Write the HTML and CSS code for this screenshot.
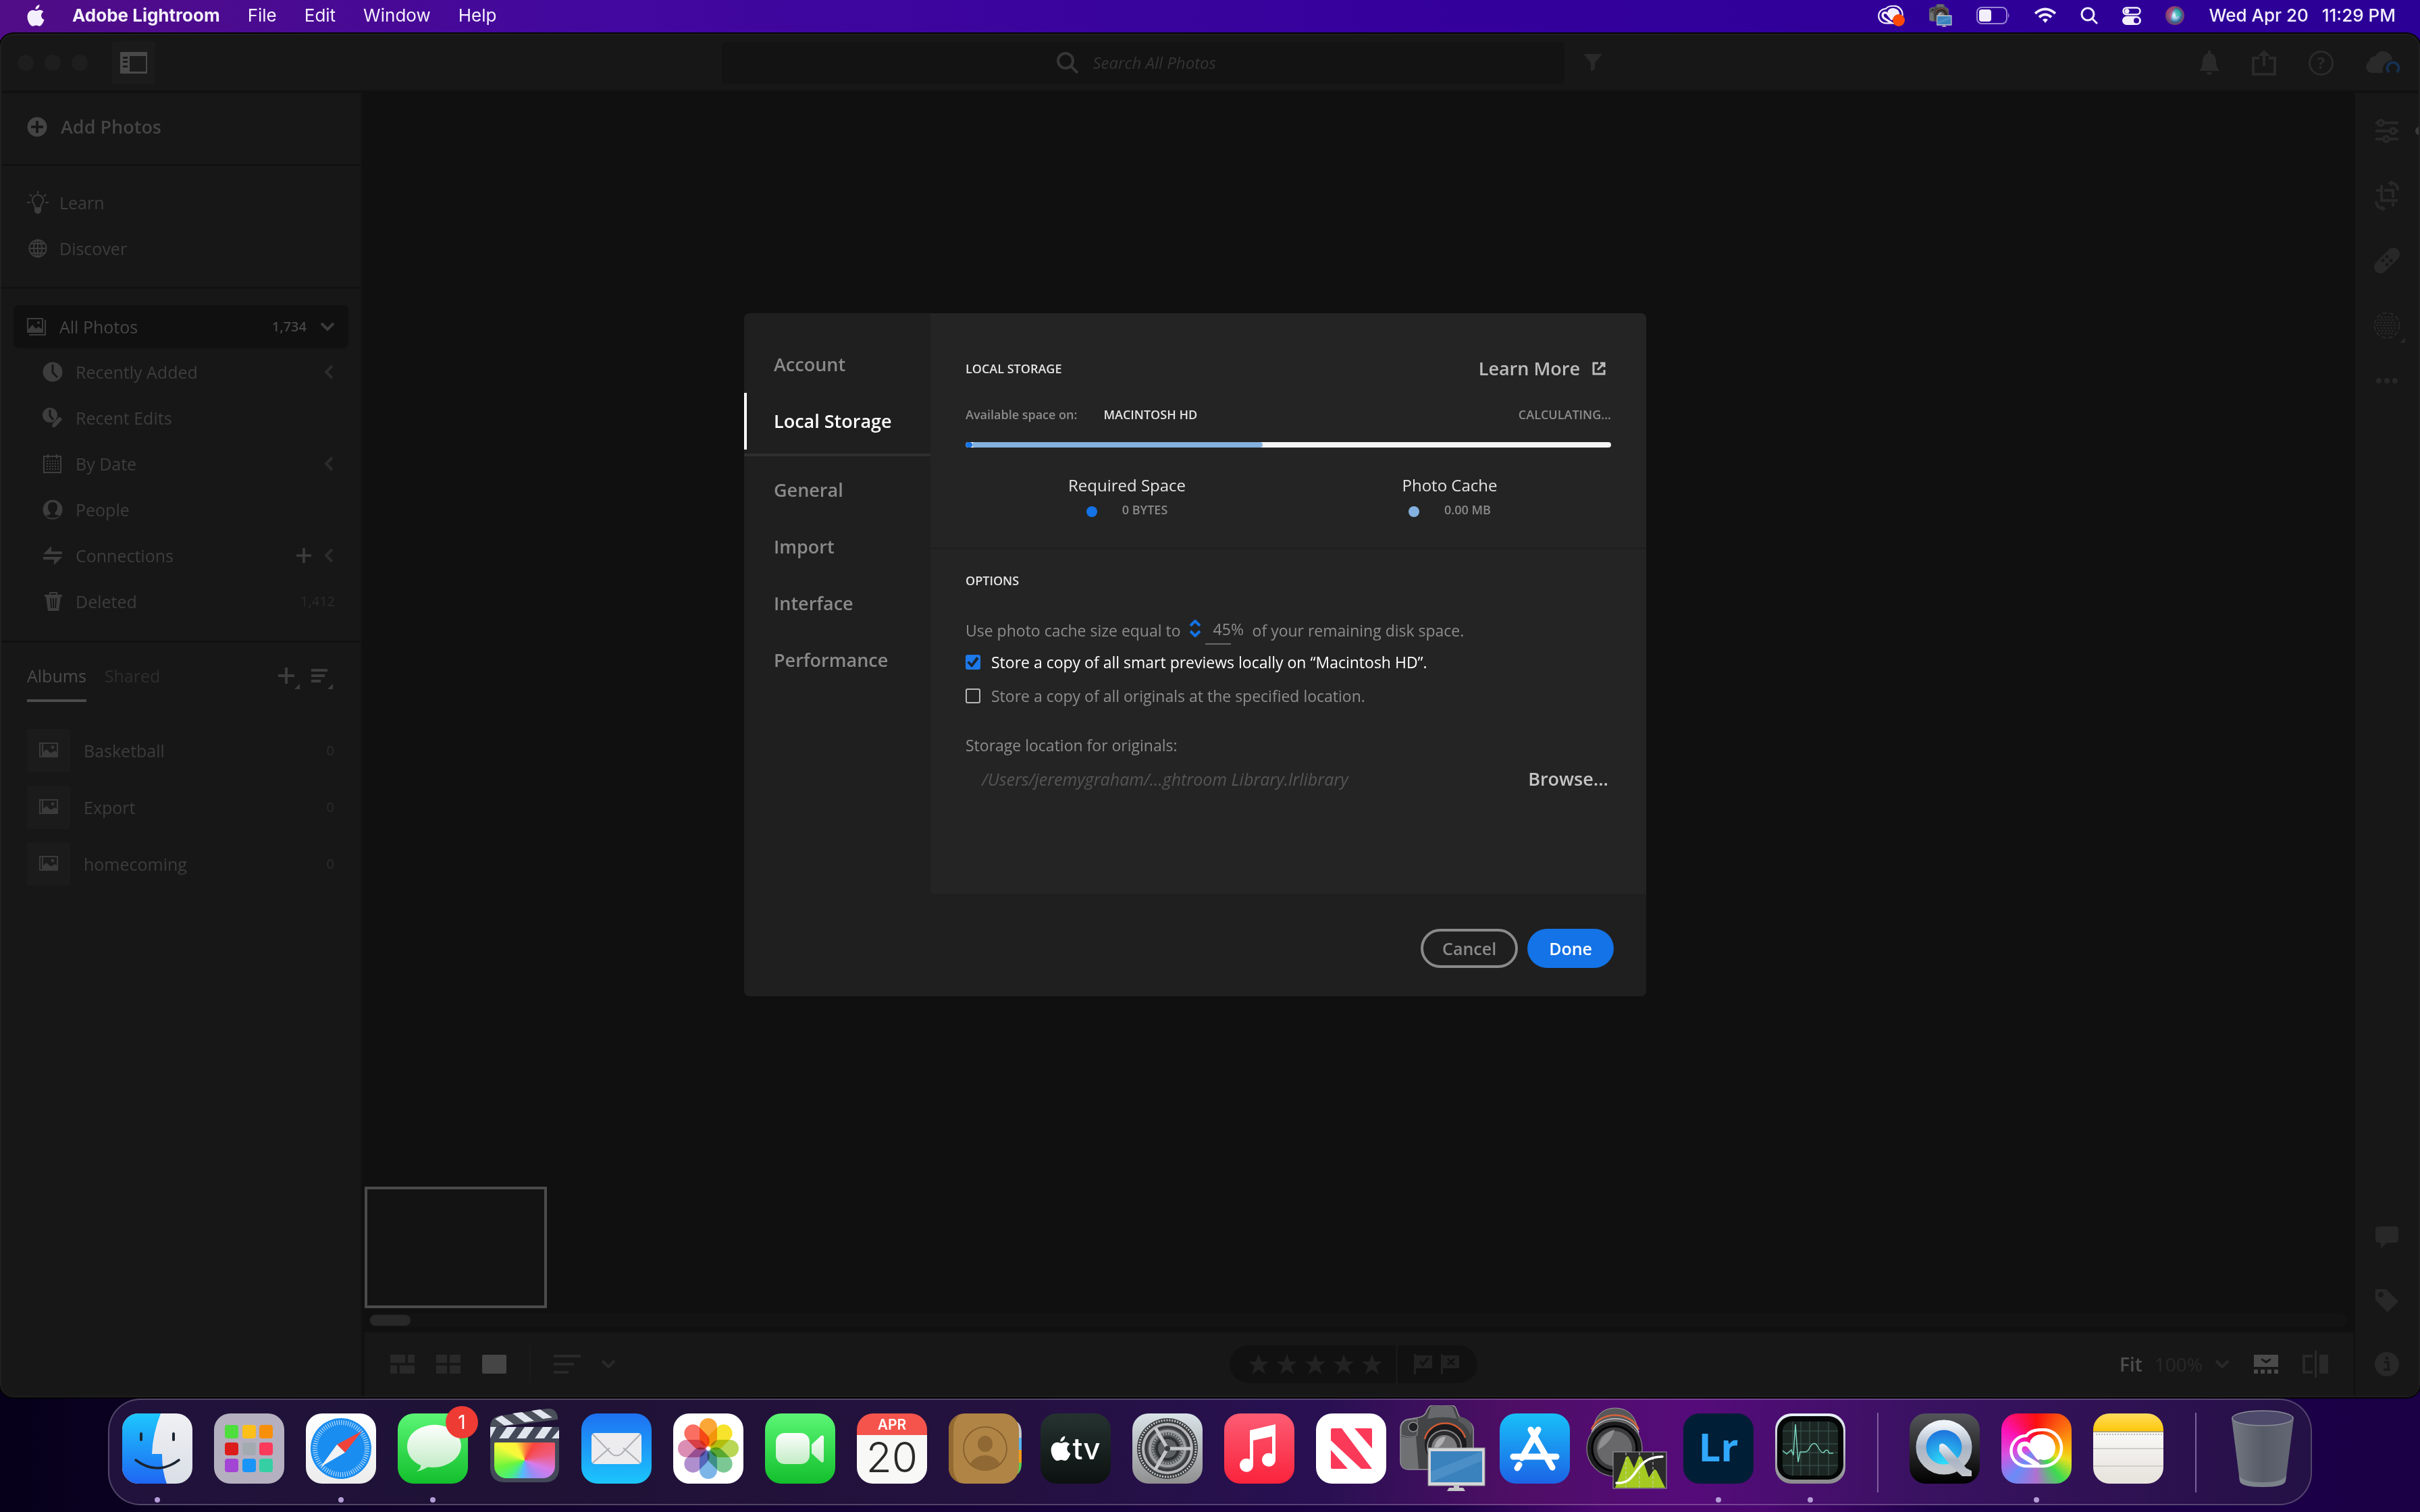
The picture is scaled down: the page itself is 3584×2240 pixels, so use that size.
FILE: index.html
```html
<!DOCTYPE html>
<html lang="en">
<head>
<meta charset="utf-8">
<title>Adobe Lightroom</title>
<link rel="stylesheet" href="styles.css">
</head>
<body>
<svg class="defs" width="0" height="0" aria-hidden="true">
  <defs>
    <symbol id="chev-left" viewBox="0 0 14 22"><path d="M12 2 3 11l9 9" fill="none" stroke="currentColor" stroke-width="4"/></symbol>
    <symbol id="chev-down" viewBox="0 0 22 14"><path d="M2 2l9 9 9-9" fill="none" stroke="currentColor" stroke-width="4"/></symbol>
    <symbol id="plus" viewBox="0 0 24 24"><path d="M12 0v24M0 12h24" stroke="currentColor" stroke-width="4"/></symbol>
    <symbol id="corner" viewBox="0 0 8 8"><path d="M8 0v8H0z" fill="currentColor"/></symbol>
    <symbol id="album" viewBox="0 0 28 22"><path d="M1 1h26v20H1zM5 1v20" fill="none" stroke="currentColor" stroke-width="2"/><path d="M6 14l5-4 5 5 3 0 4-3 4 3v6H6z" fill="currentColor"/><circle cx="20" cy="7" r="2.4" fill="currentColor"/></symbol>
    <symbol id="star" viewBox="0 0 30 30"><path d="M15 0l4 11h11l-9 7 4 12-10-7-10 7 4-12-9-7h11z" fill="currentColor"/></symbol>
    <symbol id="apple" viewBox="0 0 26 32"><path d="M18.500 0c.2 3.800-2.800 7.200-6 7C12.200 3.600 15.200.4 18.500 0zM13.500 9c1.300 0 3.200-1.500 5.700-1.300 2 .1 3.900 1 5.100 2.800-4.800 3-4 9.800 1.200 11.800C24.300 26 21.500 31.700 18.300 31.700c-1.700 0-2.500-1.100-4.700-1.100-2.300 0-3 1.100-4.800 1.200C4.800 32 .5 24.300.5 18c0-6.400 4-10 8-10.100C10.600 7.800 12.300 9 13.500 9z" fill="currentColor"/></symbol>
    <symbol id="camera" viewBox="0 0 128 128">
      <path d="M1 34q0-9 9-13l18-3q10-2 12-10l3-5q2-3 7-3h26q5 0 7 4l3 8q2 7 10 9 11 4 13 13v50q0 11-12 11H14Q2 95 1 84z" fill="#434446" stroke="#98989b" stroke-width="1.500"/>
      <path d="M46 2q18-3 32 0l7 18q-20-5-44 0z" fill="#67686b"/>
      <path d="M86 16q20 3 22 18l-3 12q-4-16-18-22z" fill="#58595c"/>
      <path d="M2 34q0-8 8-12l16-2v24q-8 6-24 0z" fill="#4e4f52" stroke="#8a8a8d"/>
      <path d="M2 46q14 4 22 0l4 48H14Q3 94 2 84z" fill="#707173"/>
      <circle cx="20" cy="32" r="7" fill="#202123" stroke="#8f8f92" stroke-width="1.500"/>
      <ellipse cx="68" cy="58" rx="31" ry="31" fill="#1b1b1d"/>
      <path d="M37 50a31 30 0 0 1 60-2" fill="none" stroke="#d35b35" stroke-width="2.500"/>
      <circle cx="66" cy="62" r="25" fill="#2a2a2c" stroke="#8a8a8c" stroke-width="2"/>
      <circle cx="66" cy="63" r="19" fill="#7c7c7e"/>
      <path d="M51 66q1-18 17-20-3 14-17 20z" fill="#b0b0b2"/>
      <rect x="42" y="63" width="84" height="56" fill="#d5d6d8" stroke="#8f9092"/>
      <rect x="46" y="68" width="76" height="46" fill="#3a82bd"/>
      <path d="M46 114V98l76-30v14z" fill="#5b9bd0" opacity=".5"/>
      <path d="M80 119h8v3h6l3 5H70l3-5h7z" fill="#c4c5c7"/>
    </symbol>
    <symbol id="ccloud" viewBox="0 0 80 60">
      <path d="M25 11C30 4 40 2 49 2a27 27 0 0 1 2 54H25A22 22 0 0 1 25 11z" fill="none" stroke="currentColor" stroke-width="4.500"/>
      <path d="M41 54L20 41q-6-5-5-11 1-7 8-7 5 0 9 6l11 14" fill="none" stroke="currentColor" stroke-width="7" stroke-linecap="round"/>
      <path d="M31 18Q37 8 50 9q17 3 18 20-1 16-16 18-7 0-11-6l-7-11q-5-6-3-12zM35 14l18 22q3 4-1 6" fill="currentColor"/>
    </symbol>
    <linearGradient id="g-finder" x1="0" y1="0" x2="0" y2="1"><stop offset="0" stop-color="#1dc7fd"/><stop offset="1" stop-color="#1f66f3"/></linearGradient>
    <linearGradient id="g-face" x1="0" y1="0" x2="0" y2="1"><stop offset="0" stop-color="#f0f0f4"/><stop offset="1" stop-color="#d9dfe6"/></linearGradient>
    <linearGradient id="g-bubble" x1="0" y1="0" x2="0" y2="1"><stop offset="0" stop-color="#fcfefc"/><stop offset="1" stop-color="#c3ecc6"/></linearGradient>
    <linearGradient id="g-steel" x1="0" y1="0" x2="0" y2="1"><stop offset="0" stop-color="#eef3fa"/><stop offset=".5" stop-color="#a9b4c4"/><stop offset="1" stop-color="#c3c6cb"/></linearGradient>
    <linearGradient id="g-can" x1="0" y1="0" x2="1" y2="0"><stop offset="0" stop-color="#7b8388"/><stop offset=".5" stop-color="#5c646b"/><stop offset="1" stop-color="#6a7179"/></linearGradient>
    <radialGradient id="g-qt" cx=".5" cy=".9" r=".9"><stop offset="0" stop-color="#2fe4fb"/><stop offset="1" stop-color="#1d63d8"/></radialGradient>
    <radialGradient id="g-siri"><stop offset="0" stop-color="#fff"/><stop offset=".35" stop-color="#8fc6e8"/><stop offset=".7" stop-color="#31688f"/><stop offset="1" stop-color="#8b3a66"/></radialGradient>
    <clipPath id="tile"><rect width="104" height="104" rx="24"/></clipPath>
  </defs>
</svg>

<header class="menubar">
  <nav class="menus" aria-label="Menu bar">
    <svg class="apple" width="26" height="32"><use href="#apple"/></svg>
    <a class="menu menu-app" href="#">Adobe Lightroom</a>
    <a class="menu" href="#">File</a>
    <a class="menu" href="#">Edit</a>
    <a class="menu" href="#">Window</a>
    <a class="menu" href="#">Help</a>
  </nav>
  <div class="status">
    <svg width="40" height="34" viewBox="0 0 40 34"><svg width="38" height="32" viewBox="0 0 80 60"><use href="#ccloud"/></svg><circle cx="31" cy="24" r="9" fill="#fa4a05"/></svg>
    <svg width="34" height="34"><use href="#camera"/></svg>
    <svg width="50" height="26" viewBox="0 0 50 26"><rect x="1" y="1" width="44" height="24" rx="7" fill="none" stroke="#9a84d6" stroke-width="2"/><rect x="4" y="4" width="18" height="18" rx="4" fill="#f2eefb"/><path d="M47 9q3 4 0 8z" fill="#9a84d6"/></svg>
    <svg width="32" height="24" viewBox="0 0 32 24" fill="none" stroke="#f2eefb" stroke-width="4"><path d="M1 9q15-13 30 0"/><path d="M7 14.500q9-8 18 0"/><path d="M12 18q4-3 8 0l-4 5z" fill="#f2eefb" stroke="none"/></svg>
    <svg width="26" height="26" viewBox="0 0 26 26" fill="none" stroke="#f2eefb" stroke-width="3"><circle cx="11" cy="11" r="9"/><path d="M17 17l8 8"/></svg>
    <svg width="28" height="28" viewBox="0 0 28 28"><rect x="1.500" y="2.500" width="25" height="10" rx="5" fill="none" stroke="#f2eefb" stroke-width="2.500"/><circle cx="7" cy="7.500" r="3.500" fill="#f2eefb"/><rect y="15" width="28" height="13" rx="6.500" fill="#f2eefb"/><circle cx="21" cy="21.500" r="4" fill="#300099"/></svg>
    <svg width="28" height="28" viewBox="0 0 28 28"><circle cx="14" cy="14" r="14" fill="url(#g-siri)"/><path d="M2 8q6-8 13-7-6 8-7 22-7-6-6-15z" fill="#d43b6a" opacity=".6"/><path d="M14 3q10 2 10 11l-9 2z" fill="#27b8a0" opacity=".6"/></svg>
    <time class="clock"><span>Wed Apr 20</span><span>11:29 PM</span></time>
  </div>
</header>

<main class="window">
  <div class="topbar">
    <div class="topbar-left">
      <div class="lights"><i></i><i></i><i></i></div>
      <button class="panel-toggle" aria-label="Toggle panel"><svg width="40" height="32" viewBox="0 0 40 32"><path d="M0 0h40v32H0zM14 6v23h24V6zM4 7v3h7V7zM4 13v3h7v-3zM4 20v3h7v-3z" fill="currentColor" fill-rule="evenodd"/></svg></button>
    </div>
    <div class="search-wrap">
      <label class="search">
        <svg width="34" height="34" viewBox="0 0 34 34" fill="none" stroke="currentColor" stroke-width="4"><circle cx="14" cy="14" r="11"/><path d="M22 22l10 10"/></svg>
        <input type="text" placeholder="Search All Photos" aria-label="Search All Photos">
      </label>
      <button class="plain" aria-label="Filter"><svg width="28" height="26" viewBox="0 0 28 26"><path d="M0 0h28L17 13v9l-6 4V13z" fill="currentColor"/></svg></button>
    </div>
    <div class="topbar-right">
      <button class="plain" aria-label="Notifications"><svg width="30" height="36" viewBox="0 0 30 36" fill="currentColor"><path d="M13 0h4v4q8 2 8 12 0 9 5 14H0q5-5 5-14Q5 6 13 4zM11 32h8q-1 4-4 4t-4-4z"/></svg></button>
      <button class="plain" aria-label="Share"><svg width="36" height="38" viewBox="0 0 36 38" fill="none" stroke="currentColor" stroke-width="4"><path d="M11 12H2v24h32V12h-9M18 24V6"/><path d="M9 9l9-9 9 9z" fill="currentColor" stroke="none"/></svg></button>
      <button class="plain help" aria-label="Help">?</button>
      <button class="plain" aria-label="Cloud sync"><svg width="52" height="36" viewBox="0 0 52 36"><path d="M9 33a9 9 0 0 1-4-17Q5 9 14 8 20-3 31 2q8 4 8 12-16 3-14 19z" fill="currentColor"/><path d="M34 32a8.500 8.500 0 1 1 12 0" fill="none" stroke="#16304f" stroke-width="4"/></svg></button>
    </div>
  </div>

  <div class="workspace">
    <aside class="sidebar">
      <div class="group group-add">
        <button class="row add"><svg width="30" height="30" viewBox="0 0 30 30"><circle cx="15" cy="15" r="14.500" fill="currentColor"/><path d="M15 6v18M6 15h18" stroke="#171717" stroke-width="4"/></svg>Add Photos</button>
      </div>
      <div class="group group-learn">
        <a class="row" href="#"><svg width="32" height="34" viewBox="0 0 32 34" fill="none" stroke="currentColor" stroke-width="2"><path d="M12 25q0-4-2-6a8 8 0 1 1 12 0q-2 2-2 6z"/><path d="M16 0v4M4 5l3 3M28 5l-3 3M0 17h5M27 17h5"/><path d="M12 25h8v5q-4 6-8 0z" fill="currentColor"/></svg>Learn</a>
        <a class="row" href="#"><svg width="32" height="28" viewBox="0 0 32 28" fill="none" stroke="currentColor" stroke-width="2"><circle cx="16" cy="14" r="12.500"/><ellipse cx="16" cy="14" rx="6" ry="12.500"/><path d="M16 1v26M3.500 14h25M6 7h20M6 21h20"/></svg>Discover</a>
      </div>
      <div class="group group-photos">
        <a class="row all" href="#"><svg width="28" height="26" viewBox="0 0 28 26"><path d="M1 1h22v20H1zM3 25h24V3" fill="none" stroke="currentColor" stroke-width="2"/><path d="M2 17l6-7 5 6 4-3 6 4v4H2z" fill="currentColor"/><circle cx="17" cy="7" r="2" fill="currentColor"/></svg><span class="grow">All Photos</span><span class="count">1,734</span><svg width="22" height="14"><use href="#chev-down"/></svg></a>
        <a class="row sub" href="#"><svg width="30" height="30" viewBox="0 0 30 30"><circle cx="15" cy="15" r="14.500" fill="currentColor"/><path d="M15 4v12l7 7" fill="none" stroke="#171717" stroke-width="3"/></svg><span class="grow">Recently Added</span><svg class="dim" width="14" height="22"><use href="#chev-left"/></svg></a>
        <a class="row sub" href="#"><svg width="30" height="30" viewBox="0 0 30 30"><circle cx="11" cy="11" r="11" fill="currentColor"/><path d="M11 3v9l5 6" fill="none" stroke="#171717" stroke-width="3"/><path d="M25 13l5 4-11 12-5 1v-6z" fill="currentColor" stroke="#171717"/></svg><span class="grow">Recent Edits</span></a>
        <a class="row sub" href="#"><svg width="30" height="28" viewBox="0 0 30 28"><path d="M2 3h25v24H2zM8 0v6M21 0v6" fill="none" stroke="currentColor" stroke-width="2"/><path d="M6 10h18M6 14h18M6 18h18M6 22h18" stroke="currentColor" stroke-width="2" stroke-dasharray="2 2"/></svg><span class="grow">By Date</span><svg class="dim" width="14" height="22"><use href="#chev-left"/></svg></a>
        <a class="row sub" href="#"><svg width="30" height="30" viewBox="0 0 30 30"><circle cx="15" cy="15" r="14.500" fill="currentColor"/><path d="M15 4q7 0 7 7 0 6-4 9 0 3 8 4-11 7-22 0 8-1 8-4-4-3-4-9 0-7 7-7z" fill="#171717"/></svg><span class="grow">People</span></a>
        <a class="row sub" href="#"><svg width="30" height="28" viewBox="0 0 30 28" fill="currentColor"><path d="M1 12L13 0v8h16v4zM29 16L17 28v-8H1v-4z"/></svg><span class="grow">Connections</span><svg width="22" height="22"><use href="#plus"/></svg><svg class="dim" width="14" height="22"><use href="#chev-left"/></svg></a>
        <a class="row sub" href="#"><svg width="30" height="28" viewBox="0 0 30 28"><path d="M3 4h26v3h-2l-3 21H8L5 7H3zM11 9l1 15M16 9v15M21 9l-1 15" fill="currentColor"/><path d="M11 4V1h10v3" fill="none" stroke="currentColor" stroke-width="2"/><path d="M12 9l1 15M16 9v15M20 9l-1 15" stroke="#171717" stroke-width="2"/></svg><span class="grow">Deleted</span><span class="count faint">1,412</span></a>
      </div>
      <div class="group group-albums">
        <div class="tabs">
          <a class="tab tab-on" href="#">Albums</a>
          <a class="tab" href="#">Shared</a>
          <span class="grow"></span>
          <button class="plain mini" aria-label="Add album"><svg width="24" height="24"><use href="#plus"/></svg><svg class="tri" width="8" height="8"><use href="#corner"/></svg></button>
          <button class="plain mini" aria-label="Sort albums"><svg width="24" height="20" viewBox="0 0 24 20"><path d="M0 2h24M0 10h20M0 18h14" stroke="currentColor" stroke-width="4"/></svg><svg class="tri" width="8" height="8"><use href="#corner"/></svg></button>
        </div>
        <a class="album" href="#"><span class="thumb"><svg width="28" height="22"><use href="#album"/></svg></span><span class="grow">Basketball</span><span class="count faint">0</span></a>
        <a class="album" href="#"><span class="thumb"><svg width="28" height="22"><use href="#album"/></svg></span><span class="grow">Export</span><span class="count faint">0</span></a>
        <a class="album" href="#"><span class="thumb"><svg width="28" height="22"><use href="#album"/></svg></span><span class="grow">homecoming</span><span class="count faint">0</span></a>
      </div>
    </aside>

    <section class="stage">
      <div class="canvas"></div>
      <div class="frame"></div>
      <div class="scroll"><i></i></div>
      <div class="toolbar">
        <div class="tools">
          <button class="plain" aria-label="Photo grid"><svg width="36" height="28" viewBox="0 0 36 28" fill="currentColor"><path d="M0 0h22v12H0zM26 0h10v12H26zM0 16h10v12H0zM14 16h22v12H14z"/></svg></button>
          <button class="plain" aria-label="Square grid"><svg width="36" height="28" viewBox="0 0 36 28" fill="currentColor"><path d="M0 0h16v12H0zM20 0h16v12H20zM0 16h16v12H0zM20 16h16v12H20z"/></svg></button>
          <button class="plain on" aria-label="Detail"><svg width="36" height="28" viewBox="0 0 36 28"><rect width="36" height="28" rx="2" fill="currentColor"/></svg></button>
          <i class="rule"></i>
          <button class="plain sort" aria-label="Sort"><svg width="40" height="28" viewBox="0 0 40 28"><path d="M0 2h40M0 14h30M0 26h22" stroke="currentColor" stroke-width="4"/></svg><svg width="22" height="14"><use href="#chev-down"/></svg></button>
        </div>
        <div class="rating">
          <div class="stars"><svg width="30" height="30"><use href="#star"/></svg><svg width="30" height="30"><use href="#star"/></svg><svg width="30" height="30"><use href="#star"/></svg><svg width="30" height="30"><use href="#star"/></svg><svg width="30" height="30"><use href="#star"/></svg></div>
          <div class="flags">
            <svg width="28" height="30" viewBox="0 0 28 30"><path d="M0 0h3v30H0zM3 2h24v19H3z" fill="currentColor"/><path d="M9 11l4 5 8-10" fill="none" stroke="#111" stroke-width="3"/></svg>
            <svg width="28" height="30" viewBox="0 0 28 30"><path d="M0 0h3v30H0zM3 2h24v19H3z" fill="currentColor"/><path d="M10 7l10 9M20 7l-10 9" fill="none" stroke="#111" stroke-width="3"/></svg>
          </div>
        </div>
        <div class="zoom">
          <span class="fit">Fit</span><span class="pct">100%</span><svg width="22" height="14"><use href="#chev-down"/></svg>
          <svg class="strip" width="36" height="28" viewBox="0 0 36 28"><path d="M0 0h36v18H0zM0 22h6v6H0zM10 22h6v6h-6zM20 22h6v6h-6zM30 22h6v6h-6z" fill="currentColor"/><path d="M11 5l7 4 7-4v3l-7 5-7-5z" fill="#171717"/></svg>
          <svg class="split" width="38" height="40" viewBox="0 0 38 40"><path d="M15 8H2v24h13" fill="none" stroke="currentColor" stroke-width="4"/><path d="M18 0h3v40h-3zM25 6h13v28H25z" fill="currentColor"/></svg>
        </div>
      </div>
    </section>

    <aside class="rail">
      <button class="plain slot edge" aria-label="Edit"><svg width="34" height="36" viewBox="0 0 34 36" fill="none" stroke="currentColor" stroke-width="4"><path d="M0 6h4M13 6h21M0 18h22M31 18h3M0 30h11M20 30h14"/><circle cx="8" cy="6" r="4"/><circle cx="26" cy="18" r="4"/><circle cx="16" cy="30" r="4"/></svg></button>
      <button class="plain slot" aria-label="Crop"><svg width="36" height="46" viewBox="0 0 36 46" fill="none" stroke="currentColor" stroke-width="4"><path d="M10 7v23h24M2 15h6M14 15h13v11M27 33v6"/><path d="M25 4q9 1 9 11M11 42Q2 40 2 31"/><path d="M26 0v9l-7-5zM10 37v9l7-4z" fill="currentColor" stroke="none"/></svg></button>
      <button class="plain slot" aria-label="Healing"><svg width="38" height="38" viewBox="0 0 38 38"><rect x="-4" y="9.500" width="46" height="19" rx="9.500" fill="currentColor" transform="rotate(-45 19 19)"/><g fill="#171717"><circle cx="19" cy="13" r="2.500"/><circle cx="25" cy="19" r="2.500"/><circle cx="19" cy="25" r="2.500"/><circle cx="13" cy="19" r="2.500"/></g></svg></button>
      <button class="plain slot" aria-label="Masking"><svg width="40" height="40" viewBox="0 0 40 40" fill="none" stroke="currentColor"><circle cx="20" cy="20" r="18.500" stroke-width="2" stroke-dasharray="7 3"/><path d="M11 8h18M7 12h26M5 16h30M4 20h32M5 24h30M7 28h26M11 32h18" stroke-width="2" stroke-dasharray="3 2"/></svg><svg class="tri" width="8" height="8"><use href="#corner"/></svg></button>
      <button class="plain slot more" aria-label="More"><svg width="34" height="8" viewBox="0 0 34 8" fill="currentColor"><circle cx="5" cy="4" r="4"/><circle cx="17" cy="4" r="4"/><circle cx="29" cy="4" r="4"/></svg></button>
      <span class="grow"></span>
      <button class="plain slot low" aria-label="Comments"><svg width="34" height="32" viewBox="0 0 34 32"><path d="M5 0h24q5 0 5 5v14q0 5-5 5H17l-9 8v-8H5q-5 0-5-5V5q0-5 5-5z" fill="currentColor"/></svg></button>
      <button class="plain slot low" aria-label="Keywords"><svg width="34" height="34" viewBox="0 0 34 34"><path d="M0 0h16l18 18-16 16L0 16zM8 4a4 4 0 1 0 .1 0z" fill="currentColor" fill-rule="evenodd"/></svg></button>
      <button class="plain slot low" aria-label="Info"><svg width="36" height="36" viewBox="0 0 36 36"><circle cx="18" cy="18" r="18" fill="currentColor"/><path d="M14 15h6v11h3M13 26h10" fill="none" stroke="#171717" stroke-width="3"/><circle cx="18" cy="9" r="2.500" fill="#171717"/></svg></button>
    </aside>
  </div>

  <div class="overlay">
    <div class="dialog" role="dialog" aria-label="Preferences">
      <nav class="prefs">
        <a class="pref" href="#">Account</a>
        <a class="pref pref-on" href="#">Local Storage</a>
        <hr>
        <a class="pref" href="#">General</a>
        <a class="pref" href="#">Import</a>
        <a class="pref" href="#">Interface</a>
        <a class="pref" href="#">Performance</a>
      </nav>
      <div class="pane">
        <section class="storage">
          <div class="line">
            <h2>LOCAL STORAGE</h2>
            <a class="learn" href="#">Learn More <svg width="20" height="20" viewBox="0 0 20 20" fill="none" stroke="currentColor" stroke-width="3"><path d="M9 2H2v16h16v-6"/><path d="M8 12l9-9M12 2h6v6"/></svg></a>
          </div>
          <div class="line space">
            <span class="avail">Available space on:</span><strong>MACINTOSH HD</strong><span class="grow"></span><span>CALCULATING...</span>
          </div>
          <div class="meter"><i class="m-req" style="width:1%"></i><i class="m-cache" style="width:45%"></i></div>
          <div class="legend">
            <div><p>Required Space</p><p class="amount"><i class="dot req"></i>0 BYTES</p></div>
            <div><p>Photo Cache</p><p class="amount"><i class="dot cache"></i>0.00 MB</p></div>
          </div>
        </section>
        <section class="options">
          <h2>OPTIONS</h2>
          <div class="cache-row">
            <label for="cache">Use photo cache size equal to</label>
            <svg width="18" height="26" viewBox="0 0 18 26" fill="none" stroke="#1473e6" stroke-width="4"><path d="M2 9l7-7 7 7M2 17l7 7 7-7"/></svg>
            <input id="cache" type="text" value="45%">
            <span>of your remaining disk space.</span>
          </div>
          <label class="check check-on"><input type="checkbox" checked>Store a copy of all smart previews locally on “Macintosh HD”.</label>
          <label class="check"><input type="checkbox">Store a copy of all originals at the specified location.</label>
          <p class="where">Storage location for originals:</p>
          <div class="line path-row"><em>/Users/jeremygraham/...ghtroom Library.lrlibrary</em><button class="plain browse">Browse...</button></div>
        </section>
      </div>
      <footer class="actions">
        <button class="pill cancel">Cancel</button>
        <button class="pill done">Done</button>
      </footer>
    </div>
  </div>
</main>

<footer class="dock-area">
  <div class="dock">
    <div class="app running"><svg viewBox="0 0 104 104"><g clip-path="url(#tile)"><rect width="104" height="104" fill="url(#g-face)"/><path d="M0 0h57q-12 30-13 60h15q0 26 7 44H0z" fill="url(#g-finder)"/></g><path d="M28 30v9M76 30v9" stroke="#1b2430" stroke-width="4" stroke-linecap="round"/><path d="M20 69q32 24 64 0" fill="none" stroke="#1b2430" stroke-width="3.500" stroke-linecap="round"/></svg></div>
    <div class="app"><svg class="t-launch" viewBox="0 0 104 104"><g><rect x="16" y="17" width="20" height="20" rx="4" fill="#4ede3e"/><rect x="42" y="17" width="20" height="20" rx="4" fill="#fdbf1a"/><rect x="67" y="17" width="20" height="20" rx="4" fill="#f78f0b"/><rect x="16" y="43" width="20" height="19" rx="4" fill="#dc1c1a"/><rect x="42" y="43" width="20" height="19" rx="4" fill="#a3abb0"/><rect x="67" y="43" width="20" height="19" rx="4" fill="#fb3b5b"/><rect x="16" y="67" width="20" height="20" rx="4" fill="#a345d4"/><rect x="42" y="67" width="20" height="20" rx="4" fill="#1995f7"/><rect x="67" y="67" width="20" height="20" rx="4" fill="#35cfa3"/></g></svg></div>
    <div class="app running"><svg class="t-white" viewBox="0 0 104 104"><circle cx="52" cy="52" r="45" fill="#1a8df0"/><circle cx="52" cy="52" r="38.500" fill="none" stroke="#cfe8fb" stroke-width="7" stroke-dasharray="1 2.360"/><path d="M83 26L46 46l12 12z" fill="#f0433a"/><path d="M22 79l24-33 12 12z" fill="#f1f2f4"/></svg></div>
    <div class="app running"><svg class="t-green" viewBox="0 0 104 104"><path d="M28 86q8-5 6-12a39 31 0 1 1 12 4q-8 6-18 8z" fill="url(#g-bubble)"/><path d="M52 18c22 0 38 13 38 31S74 80 52 80 14 67 14 49s16-31 38-31z" fill="url(#g-bubble)"/></svg><span class="badge">1</span></div>
    <div class="app"><svg class="t-fcp" viewBox="0 0 104 104"><path d="M1 20Q1 8 12 4L84-7q14-2 17 12v4L4 21z" fill="#4a4f5a"/><path d="M8 8l10-5 18 13-14 2zM34 0l14-2 18 13-14 2zM62-4l13-2 18 12-14 2z" fill="#e1e5ee"/><path d="M1 20h102v60q0 22-22 22H23Q1 102 1 80z" fill="#434958"/><path d="M1 37V20h9zM26 20h14L28 37H14zM52 20h14L54 37H40zM79 20h14L81 37H67zM103 24v13H92z" fill="#e1e5ee"/></svg><i class="spectrum"></i></div>
    <div class="app"><svg class="t-mail" viewBox="0 0 104 104"><rect x="15" y="29" width="74" height="46" rx="5" fill="#ececee"/><path d="M17 73l25-22M87 73L62 51M17 31l28 29q7 5 14 0l28-29" fill="none" stroke="#aeb0b4" stroke-width="2"/></svg></div>
    <div class="app"><svg class="t-white photos" viewBox="0 0 104 104"><g><rect x="39" y="7" width="26" height="42" rx="13" fill="#fb9d22"/><rect x="39" y="7" width="26" height="42" rx="13" fill="#f7e014" transform="rotate(45 52 52)"/><rect x="39" y="7" width="26" height="42" rx="13" fill="#b2d342" transform="rotate(90 52 52)"/><rect x="39" y="7" width="26" height="42" rx="13" fill="#6ec28a" transform="rotate(135 52 52)"/><rect x="39" y="7" width="26" height="42" rx="13" fill="#6eaee6" transform="rotate(180 52 52)"/><rect x="39" y="7" width="26" height="42" rx="13" fill="#a783c9" transform="rotate(225 52 52)"/><rect x="39" y="7" width="26" height="42" rx="13" fill="#d881ac" transform="rotate(270 52 52)"/><rect x="39" y="7" width="26" height="42" rx="13" fill="#fa5f50" transform="rotate(315 52 52)"/></g></svg></div>
    <div class="app"><svg class="t-green" viewBox="0 0 104 104"><rect x="16" y="29" width="50" height="46" rx="13" fill="url(#g-bubble)"/><path d="M69 46l14-13q4-2 4 3v33q0 5-4 3L69 59z" fill="url(#g-bubble)"/></svg></div>
    <div class="app cal"><span class="month">APR</span><span class="day">20</span></div>
    <div class="app"><svg viewBox="0 0 104 104"><path d="M92 10q16 0 16 20v10H92z" fill="#c4c7c9"/><path d="M92 36h16v20H92z" fill="#56b4f2"/><path d="M92 54h16v20H92z" fill="#fb9c15"/><path d="M92 73h16q0 20-16 20z" fill="#53cf59"/><rect width="104" height="104" rx="24" fill="#b08445"/><path d="M16 2Q0 8 0 24v56q0 16 16 22-9-8-9-22V24Q7 10 16 2z" fill="#936a31"/><g fill="none" stroke="#80592a" stroke-width="1.500"><circle cx="54" cy="52" r="32"/></g><ellipse cx="54" cy="45" rx="11" ry="12" fill="#8f6833"/><path d="M32 74q8-12 22-12t22 12q-9 11-22 11T32 74z" fill="#8f6833"/></svg></div>
    <div class="app tv"><svg width="30" height="38" viewBox="0 0 26 32"><use href="#apple"/></svg><span>tv</span></div>
    <div class="app"><svg class="t-gear" viewBox="0 0 104 104"><circle cx="52" cy="52" r="45" fill="#3a3d3f"/><circle cx="52" cy="52" r="42" fill="none" stroke="#c8cacb" stroke-width="3" stroke-dasharray="2 2"/><circle cx="52" cy="52" r="36" fill="none" stroke="#b4b6b7" stroke-width="4"/><circle cx="52" cy="52" r="30" fill="#55585a"/><circle cx="52" cy="52" r="26" fill="none" stroke="#9da0a1" stroke-width="4"/><circle cx="52" cy="52" r="22" fill="none" stroke="#9da0a1" stroke-width="3" stroke-dasharray="2 2"/><circle cx="52" cy="52" r="16" fill="#5d6062" stroke="#2e3133" stroke-width="4"/><path d="M52 52h36M52 52L34 21M52 52L34 83" stroke="#c4c6c7" stroke-width="5"/><circle cx="52" cy="52" r="4" fill="#3a3d3f"/></svg></div>
    <div class="app"><svg class="t-music" viewBox="0 0 104 104"><path d="M38 25l38-9v52a10 10 0 1 1-5-8V34l-28 6v36a10 10 0 1 1-5-8z" fill="#fff"/></svg></div>
    <div class="app"><svg class="t-flat" viewBox="0 0 104 104"><path d="M22 24q0-2 2-2h14l45 60H67L22 40zM57 22h24q2 0 2 2v28zM22 54l25 28H24q-2 0-2-2z" fill="#fb3a59"/></svg></div>
    <div class="app"><svg class="cam" viewBox="0 0 128 128"><use href="#camera" width="128" height="128"/></svg></div>
    <div class="app"><svg class="t-store" viewBox="0 0 104 104" stroke="#fff" stroke-width="9" stroke-linecap="round"><path d="M46 24l32 56M57 24L33 66M29 76l-3 5M20 64h64"/></svg></div>
    <div class="app"><svg class="lens" viewBox="0 0 120 120"><path d="M10 34Q14 0 43 0t34 34l6 28H3z" fill="#58585a" stroke="#9a9a9c"/><path d="M8 36a37 30 0 0 1 70 0" fill="none" stroke="#c9c9cb" stroke-width="1.500"/><path d="M8 32a37 32 0 0 1 70 0" fill="none" stroke="#d9623b" stroke-width="2.500"/><circle cx="42" cy="60" r="41" fill="#1d1d1f" stroke="#77777a" stroke-width="1.500"/><circle cx="42" cy="60" r="33" fill="#3b3b3d" stroke="#000" stroke-width="3"/><circle cx="42" cy="60" r="26" fill="#68686a"/><path d="M18 62q2-24 24-30-3 16-24 30z" fill="#8e8e90"/><rect x="40" y="65" width="79" height="54" fill="#2b2b2c" stroke="#a2a2a4"/><path d="M43 118l16-45q3-4 5 1l7 15 7-17q3-3 6 5l9 26 7-11q3-3 6 4l11 22z" fill="#a5cb22"/><path d="M59 66v52M79 66v52M99 66v52" stroke="#d0d0d0" stroke-dasharray="4 3"/><path d="M45 111c34 2 24-39 68-39" fill="none" stroke="#fff" stroke-width="3.500" stroke-linecap="round"/></svg></div>
    <div class="app running lr">Lr</div>
    <div class="app running"><svg class="t-act" viewBox="0 0 104 104"><rect x="3" y="4" width="98" height="94" rx="22" fill="#060808"/><rect x="11" y="12" width="82" height="80" rx="14" fill="#1c2724"/><path d="M11 26h82M11 45h82M11 58h82M11 77h82M26 12v80M38 12v80M51 12v80M64 12v80M79 12v80" stroke="#3e5a52"/><path d="M11 55l6 5 7-6 3 8 3-46 4 56 3-15h8q4-1 7-8 6-9 11 0 5 10 9 9 5-8 8 1h6" fill="none" stroke="#79d3bd" stroke-width="1.500"/></svg></div>
    <i class="sep"></i>
    <div class="app"><svg class="t-qt" viewBox="0 0 104 104"><ellipse cx="51" cy="50" rx="34" ry="33" fill="url(#g-qt)" stroke="url(#g-steel)" stroke-width="15"/><path d="M44 47q4-6 12 2l28 32q8 4 8 4v8H78Q58 76 44 56z" fill="url(#g-steel)"/></svg></div>
    <div class="app running cc"><svg width="80" height="60" viewBox="0 0 80 60"><use href="#ccloud"/></svg></div>
    <div class="app"><svg class="t-notes" viewBox="0 0 104 104"><path d="M0 26h104v2H0z" fill="#b6a56d"/><path d="M4 31h98" stroke="#b9b9b6" stroke-width="2" stroke-dasharray="2 2"/><path d="M0 52h104M0 78h104" stroke="#cfcecb" stroke-width="2"/></svg></div>
    <i class="sep"></i>
    <div class="app"><svg class="bin" viewBox="0 0 104 120"><path d="M6 13l12 93q2 9 34 9t34-9l12-93z" fill="url(#g-can)" opacity=".9"/><ellipse cx="52" cy="13" rx="45" ry="11" fill="#4d4a6b" stroke="#8b8d99" stroke-width="1.500"/><path d="M17 98q6 10 35 10t35-10l-1 8q-2 9-34 9t-34-9z" fill="#8f979d" opacity=".6"/></svg></div>
  </div>
</footer>
</body>
</html>
```
FILE: styles.css
```css
:root {
  --ui: "Open Sans", "Noto Sans", sans-serif;
  --mac: Inter, "Liberation Sans", sans-serif;
  --chrome: #171717;
  --canvas: #101010;
  --line: #111;
}

* { box-sizing: border-box; }

body {
  margin: 0;
  min-height: 100vh;
  display: grid;
  grid-template-rows: 50px 1fr 170px;
  overflow: hidden;
  font: 24px/36px var(--ui);
  color: #3c3c3c;
  background:
    linear-gradient(90deg, #510d86, #42089f 25%, #34009c 60%, #2b0096) top / 100% 72px no-repeat,
    linear-gradient(90deg, #06001a, #0d0224 8%, #150333 30%, #1c0245 60%, #4b0670 66%, #4b0670 73%, #1c0048 80%, #1b0046);
}

a { color: inherit; text-decoration: none; }
button, input { font: inherit; color: inherit; border: 0; background: none; padding: 0; margin: 0; }
h2, p, hr { margin: 0; }
svg { display: block; flex: none; }
.defs { position: absolute; }
.grow { flex: 1; }

/* Menu bar */
.menubar { display: flex; justify-content: space-between; padding: 0 36px 4px 40px; font: 400 26px/46px var(--mac); color: #f4effc; }
.menus, .status { display: flex; align-items: center; }
.menus { gap: 41px; }
.menu-app { font-weight: 700; }
.status { gap: 36px; }
.clock { display: flex; gap: 20px; font-weight: 500; }

/* App window */
.window { position: relative; display: flex; flex-direction: column; background: var(--chrome); border: 2px solid #202020; border-bottom-color: #1d1d1d; border-radius: 20px; box-shadow: 0 0 0 2px #050505; overflow: hidden; min-height: 0; }
.topbar { height: 82px; display: grid; grid-template-columns: 15fr 1304px 17fr; align-items: center; padding: 0 26px 0 24px; }
.topbar-left { display: flex; align-items: center; }
.lights { display: flex; gap: 16px; margin-right: 36px; }
.lights i { width: 24px; height: 24px; border-radius: 50%; background: #1e1e1e; }
.panel-toggle { width: 64px; height: 64px; display: grid; place-items: center; border-radius: 4px; background: #1b1b1b; color: #494949; }
.search-wrap { display: flex; align-items: center; gap: 28px; color: #292929; }
.search { width: 1248px; height: 62px; display: flex; align-items: center; justify-content: center; gap: 20px; background: #131313; border-radius: 6px; color: #363636; }
.search input { width: 204px; font-style: italic; outline: 0; appearance: none; }
.search input::placeholder { color: #343434; opacity: 1; }
.topbar-right { display: flex; justify-content: flex-end; align-items: center; gap: 48px; color: #2a2a2a; }
.plain { display: flex; align-items: center; justify-content: center; }
.help { width: 37px; height: 37px; border: 3px solid; border-radius: 50%; font-weight: 700; line-height: 30px; }

.workspace { flex: 1; min-height: 0; display: grid; grid-template-columns: 534px 1fr 94px; background: var(--canvas); }
.sidebar, .rail { background: var(--chrome); border-top: 4px solid var(--line); }
.sidebar { border-right: 2px solid #131313; font-size: 25px; }

/* Sidebar */
.group { border-bottom: 3px solid var(--line); }
.row { width: 100%; height: 68px; display: flex; align-items: center; gap: 16px; padding: 0 20px; color: #3d3d3d; }
.row.add { height: 100px; gap: 20px; font-size: 27px; font-weight: 600; color: #444; }
.group-add { height: 108px; padding: 0 18px; }
.group-learn { padding: 20px 18px 23px; }
.group-photos { padding: 24px 18px; }
.row.all { height: 64px; margin-bottom: 1px; gap: 20px; background: #101010; border-radius: 8px; color: #474747; }
.row.all svg { color: #3c3c3c; }
.row.sub { padding-left: 43px; gap: 19px; }
.row.sub .dim { margin-right: 2px; }
.dim { color: #2c2c2c; }
.count { font-size: 20px; font-weight: 600; }
.faint { color: #2c2c2c; font-weight: 400; }
.group-albums { border: 0; padding: 14px 37px 14px 38px; display: grid; gap: 20px; }
.tabs { display: flex; gap: 27px; height: 74px; margin-bottom: 20px; }
.tab { display: flex; align-items: center; border-bottom: 4px solid transparent; color: #2e2e2e; }
.tab-on { color: #4c4c4c; border-color: #4c4c4c; }
.mini { position: relative; width: 24px; height: 70px; color: #3c3c3c; }
.mini + .mini { margin: 0 12px 0 -2px; }
.tri { position: absolute; right: -8px; bottom: 15px; }
.album { display: flex; align-items: center; gap: 20px; height: 64px; padding-right: 2px; }
.thumb { width: 64px; height: 64px; display: grid; place-items: center; background: #1b1b1b; border-radius: 4px; padding-bottom: 2px; color: #3a3a3a; }

/* Stage */
.stage { display: flex; flex-direction: column; min-width: 0; }
.canvas { flex: 1; }
.frame { width: 270px; height: 180px; margin-left: 4px; border: 4px solid #4b4b4b; background: #131313; }
.scroll { height: 20px; margin: 8px 12px 8px 10px; padding: 2px; background: #131313; border-radius: 10px; }
.scroll i { display: block; width: 60px; height: 16px; border-radius: 8px; background: #282828; }
.toolbar { height: 94px; margin: 0 2px 0 4px; padding: 0 38px; display: grid; grid-template-columns: 1fr auto 1fr; align-items: center; background: var(--chrome); color: #292929; }
.tools { display: flex; align-items: center; gap: 32px; }
.on { color: #454545; }
.rule { width: 2px; height: 52px; margin: 0 2px; background: #1b1b1b; }
.sort { gap: 30px; }
.rating { height: 56px; display: flex; align-items: center; margin-right: 18px; background: #111; border-radius: 28px; color: #222; }
.stars { display: flex; gap: 12px; padding: 0 20px 0 28px; }
.flags { display: flex; gap: 12px; height: 56px; align-items: center; padding: 0 26px 0 24px; border-left: 3px solid #181818; }
.zoom { display: flex; align-items: center; justify-content: flex-end; gap: 18px; font-size: 28px; }
.fit { color: #4e4e4e; font-weight: 600; }
.strip { margin: 0 18px 0 18px; color: #4a4a4a; }

/* Tool rail */
.rail { display: flex; flex-direction: column; align-items: center; padding-top: 8px; color: #282828; }
.slot { position: relative; width: 60px; height: 96px; }
.slot .tri { right: 3px; bottom: 22px; }
.more { height: 68px; }
.low { height: 94px; }
.edge::after { content: ""; position: absolute; right: -24px; width: 12px; height: 12px; border-radius: 50%; background: #3a3a3a; }

/* Preferences dialog */
.overlay { position: absolute; inset: 0; display: flex; align-items: center; justify-content: center; padding: 0 44px 180px 0; }
.dialog { width: 1336px; display: grid; grid-template: 1fr 152px / 276px 1fr; background: #1f1f1f; border-radius: 8px; overflow: hidden; color: #8d8d8d; }
.prefs { padding-top: 34px; font-size: 27px; font-weight: 600; }
.pref { height: 84px; display: flex; align-items: center; padding-left: 40px; border-left: 4px solid transparent; color: #8a8a8a; }
.pref-on { color: #fff; border-color: #fff; }
.prefs hr { height: 4px; margin: 6px 0 8px; border: 0; background: #2e2e2e; }
.pane { display: flex; flex-direction: column; background: #242424; }
.storage { padding: 60px 52px 42px; border-bottom: 3px solid #1f1f1f; }
.line { display: flex; align-items: center; justify-content: space-between; height: 44px; }
h2 { font-size: 18px; line-height: 28px; font-weight: 600; color: #e4e4e4; }
.learn { display: flex; align-items: center; gap: 18px; padding-right: 8px; font-size: 27px; font-weight: 600; color: #bcbcbc; }
.space { margin: 24px 0 19px; font-size: 18px; font-weight: 600; }
.space strong { margin-left: 39px; font-weight: 600; color: #e4e4e4; }
.meter { display: flex; height: 8px; border-radius: 4px; background: #f5f5f5; overflow: hidden; }
.meter i { border-radius: 4px; }
.m-req, .req { background: #1473e6; }
.m-cache, .cache { background: #84b1df; }
.legend { display: grid; grid-template-columns: 1fr 1fr; margin-top: 38px; text-align: center; color: #e4e4e4; }
.amount { display: flex; align-items: center; justify-content: center; gap: 37px; margin-top: 4px; font-size: 18px; line-height: 28px; font-weight: 600; color: #8a8a8a; }
.dot { width: 16px; height: 16px; margin-top: 6px; border-radius: 50%; }
.options { min-height: 510px; padding: 32px 52px; font-size: 23px; }
.cache-row { display: flex; align-items: center; height: 44px; margin-top: 38px; }
.cache-row svg { margin: 0 6px 6px 12px; }
.cache-row input { width: 70px; height: 42px; padding: 0 0 4px 12px; background: linear-gradient(#6a6a6a, #6a6a6a) left bottom / 38px 2px no-repeat; }
.check { display: flex; align-items: center; gap: 16px; height: 50px; }
.check-on { color: #fff; }
.check input { appearance: none; width: 22px; height: 22px; border: 2px solid #b9b9b9; border-radius: 3px; }
.check input:checked { border: 0; background: #1d79ea; }
.check input:checked::after { content: ""; display: block; width: 22px; height: 22px; background: #1c2430; clip-path: polygon(10% 52%, 24% 42%, 40% 60%, 74% 14%, 90% 26%, 42% 86%); }
.where { margin-top: 30px; }
.path-row { height: 52px; margin-top: 6px; }
.path-row em { padding-left: 24px; font-size: 25px; color: #555; }
.browse { padding-right: 4px; font-size: 27px; font-weight: 600; color: #c4c4c4; }
.actions { grid-column: 1 / -1; display: flex; justify-content: flex-end; align-items: center; gap: 14px; padding: 10px 48px 0; background: #1f1f1f; }
.pill { height: 58px; padding: 0 32px; border-radius: 29px; font-size: 25px; font-weight: 600; }
.cancel { padding: 0 28px; border: 4px solid #8a8a8a; color: #8a8a8a; }
.done { background: #1473e6; color: #fff; }

/* Dock */
.dock-area { display: flex; justify-content: center; padding: 2px 0 10px; }
.dock { display: flex; align-items: center; gap: 32px; height: 158px; padding: 0 19px 10px 19px; border: 2px solid #ffffff38; border-radius: 48px; background: linear-gradient(90deg, #20123c, #1f1235 20%, #24113f 40%, #281052 55%, #4f0e66 64%, #550b7a 72%, #3a1262 82%, #241145); }
.app { position: relative; width: 104px; height: 104px; border-radius: 24px; }
.app > svg { width: 104px; height: 104px; border-radius: 24px; overflow: visible; }
.running::before { content: ""; position: absolute; left: 48px; bottom: -28px; width: 8px; height: 8px; border-radius: 50%; background: #b49cd6; }
.t-launch { background: #b5b0bf; }
.t-white { background: linear-gradient(#fff, #ececec); }
.t-flat { background: #fff; }
.t-green { background: linear-gradient(#5bf675, #12bf2c); }
.t-mail { background: linear-gradient(#1e70f2, #1bc6fd); }
.photos { background: #fff; }
.photos rect { mix-blend-mode: multiply; opacity: .9; }
.t-gear { background: linear-gradient(#d9e3e8, #8f8f8f); }
.t-music { background: linear-gradient(#fc5c74, #fa233b); }
.t-store { background: linear-gradient(#18bff8, #1c63e6); fill: none; }
.t-act { background: linear-gradient(#e9f1fa, #8a8a8c); }
.t-qt { background: linear-gradient(#55565a, #000); }
.t-notes { background: linear-gradient(#ffdc5c, #fec709 26%, #f8f8f6 26%, #e6e2dc); }
.badge { position: absolute; right: -15px; top: -11px; width: 48px; height: 48px; border-radius: 50%; background: #ee3b34; color: #fff; font: 28px/48px var(--mac); text-align: center; }
.spectrum { position: absolute; left: 7px; top: 43px; width: 90px; height: 53px; border-radius: 2px 2px 18px 18px; background: conic-gradient(from 0deg, #fb8a3c, #f9443e 30deg, #f05a78 75deg, #d77bea 110deg, #9a8bf6 150deg, #53bdfb 190deg, #4bf07a 225deg, #6cf53c 255deg, #f5fa3a 300deg, #fdf23a 330deg, #fb8a3c); }
.cal { background: linear-gradient(#f4544c, #f4544c) top / 100% 32px no-repeat, #f8f8f7; overflow: hidden; display: flex; flex-direction: column; align-items: center; font-family: var(--mac); }
.month { color: #fff; font-size: 21px; line-height: 34px; font-weight: 600; }
.day { color: #2a2a2a; font-size: 62px; line-height: 62px; font-weight: 300; }
.tv { display: flex; align-items: center; justify-content: center; gap: 2px; background: linear-gradient(#253330, #0c1110); color: #fff; font: 500 44px/100px var(--mac); }
.tv > svg { width: 30px; height: 38px; border-radius: 0; }
.app > .cam { width: 128px; height: 128px; margin: -12px 0 0 -12px; border-radius: 0; }
.app > .lens { width: 120px; height: 120px; margin: -8px 0 0 -8px; border-radius: 0; }
.lr { background: #001e36; color: #31a8ff; font: 700 58px/98px var(--ui); text-align: center; }
.cc { display: grid; place-items: center; color: #fff; background: conic-gradient(from 0deg, #fb0f0f, #fb6a10 50deg, #fbb60e 90deg, #e8e020 110deg, #3cdc50 140deg, #b070d0 180deg, #6a8cf8 220deg, #d850e0 260deg, #fc12b8 300deg, #fb0f5a 330deg, #fb0f0f); }
.app.cc > svg { width: 80px; height: 60px; border-radius: 0; }
.sep { width: 2px; height: 118px; margin: 12px 14px 0 15px; background: #7f5f9f; }
.app > .bin { width: 104px; height: 120px; margin-top: -6px; }
```
